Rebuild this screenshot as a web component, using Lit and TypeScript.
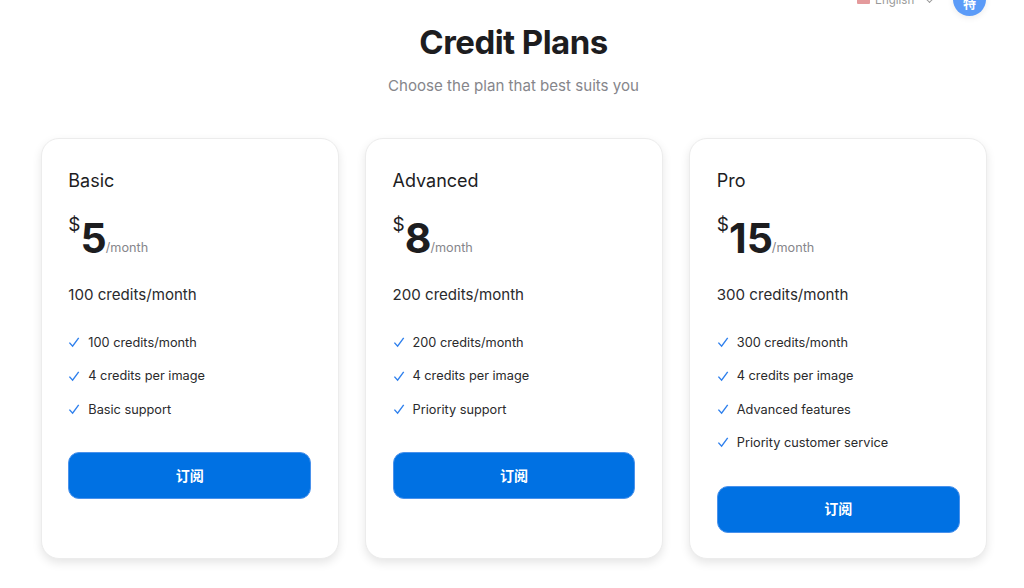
import { LitElement, html, css, svg } from "lit";
import { customElement } from "lit/decorators.js";

const plans = [
  { name: "Basic", price: "5", credits: "100 credits/month", features: ["100 credits/month", "4 credits per image", "Basic support"] },
  { name: "Advanced", price: "8", credits: "200 credits/month", features: ["200 credits/month", "4 credits per image", "Priority support"] },
  { name: "Pro", price: "15", credits: "300 credits/month", features: ["300 credits/month", "4 credits per image", "Advanced features", "Priority customer service"] },
];

const check = svg`<svg class="check" width="12" height="12" viewBox="0 0 12 12" fill="none"><path d="M1.4 5.6 L4.6 9.2 L10.7 0.8" stroke="#2f80ed" stroke-width="1.4"/></svg>`;

@customElement("app-root")
export class AppRoot extends LitElement {
  static styles = css`
    :host { display: block; width: 1024px; height: 588px; overflow: hidden; background: #fff; font-family: Inter, "Noto Sans CJK SC", sans-serif; color: #1d1d1f; position: relative; }
    .top { position: absolute; top: -17px; right: 38px; display: flex; align-items: center; height: 33px; }
    .flag { width: 13px; height: 8px; background: #e49a9c; border-radius: 1px; margin-right: 5px; }
    .lang { font-size: 11.5px; color: #999; width: 52px; }
    .caret { width: 4px; height: 4px; border-right: 1px solid #999; border-bottom: 1px solid #999; transform: rotate(45deg); margin: 0 21px 0 0; }
    .avatar { width: 33px; height: 33px; border-radius: 50%; background: #5b9bf8; box-shadow: 0 2px 6px rgba(0,0,0,.08); color: #fff; display: flex; align-items: flex-end; justify-content: center; font-size: 13px; font-weight: 600; line-height: 25px; }
    h1 { margin: 0; padding: 22px 0 0 3px; text-align: center; font-size: 33px; line-height: 40px; font-weight: 700; letter-spacing: -0.55px; color: #1d1d1f; }
    .sub { margin: 14px 0 0; padding-left: 3px; text-align: center; font-size: 15.1px; line-height: 20px; color: #86868b; }
    .grid { display: grid; grid-template-columns: repeat(3, 1fr); gap: 26.7px; padding: 0 37px 0 41px; margin-top: 42px; }
    .card { box-sizing: border-box; height: 421px; border: 1px solid #ececec; border-radius: 18px; box-shadow: 0 4px 10px rgba(0,0,0,.1); padding: 27px 26.3px 0; background: #fff; }
    h2 { margin: 0; font-size: 18px; line-height: 30px; font-weight: 400; }
    .price { display: flex; align-items: flex-start; height: 50px; margin-top: 17px; }
    .cur { font-size: 19px; line-height: 24px; }
    .num { font-size: 41px; line-height: 50px; font-weight: 700; }
    .per { font-size: 12.7px; color: #86868b; align-self: flex-end; line-height: 16px; margin: 0 0 7px -1px; }
    .credits { margin-top: 20px; font-size: 15.1px; line-height: 24px; color: #2a2a2c; }
    ul { list-style: none; margin: 26px 0 0; padding: 0; display: flex; flex-direction: column; gap: 13px; }
    li { display: flex; align-items: center; font-size: 12.75px; line-height: 20.4px; color: #2a2a2c; }
    .check { margin-right: 8px; flex: none; }
    button { display: block; width: 100%; height: 47px; margin-top: 32px; border: 1px solid #4a92ec; border-radius: 11px; background: #0071e3; color: #fff; font-family: inherit; font-size: 14px; font-weight: 600; padding: 0 0 2px; }
  `;
  render() {
    return html`
      <div class="top"><span class="flag"></span><span class="lang">English</span><span class="caret"></span><span class="avatar">特</span></div>
      <h1>Credit Plans</h1>
      <p class="sub">Choose the plan that best suits you</p>
      <div class="grid">
        ${plans.map(p => html`
          <section class="card">
            <h2>${p.name}</h2>
            <div class="price"><span class="cur">$</span><span class="num">${p.price}</span><span class="per">/month</span></div>
            <div class="credits">${p.credits}</div>
            <ul>${p.features.map(f => html`<li>${check}${f}</li>`)}</ul>
            <button>订阅</button>
          </section>`)}
      </div>`;
  }
}
